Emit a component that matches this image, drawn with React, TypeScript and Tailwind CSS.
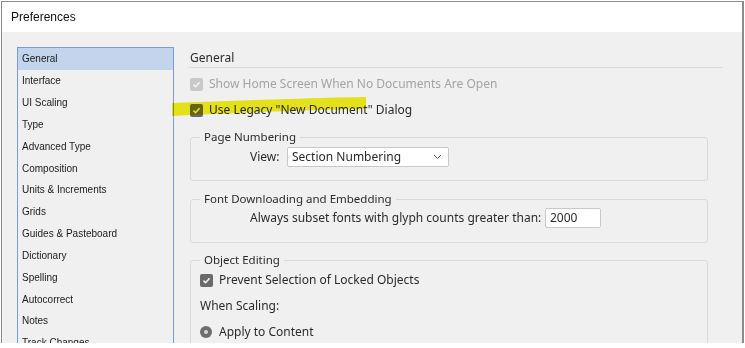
import React from "react";

const items = [
  "General",
  "Interface",
  "UI Scaling",
  "Type",
  "Advanced Type",
  "Composition",
  "Units & Increments",
  "Grids",
  "Guides & Pasteboard",
  "Dictionary",
  "Spelling",
  "Autocorrect",
  "Notes",
  "Track Changes",
];

function Check({ disabled }: { disabled?: boolean }) {
  return (
    <span
      className={`flex h-[13px] w-[13px] shrink-0 items-center justify-center rounded-[2px] ${
        disabled ? "bg-[#c9c9c9]" : "bg-[#6a6a6a]"
      }`}
    >
      <svg width="9" height="9" viewBox="0 0 9 9">
        <path d="M1.5 4.6 L3.6 6.7 L7.6 2.2" fill="none" stroke="#f4f4f4" strokeWidth="1.6" />
      </svg>
    </span>
  );
}

function Group({ title, children, className }: { title: string; children: React.ReactNode; className?: string }) {
  return (
    <fieldset className={`w-[518px] rounded-[3px] border border-[#dadada] ${className ?? ""}`}>
      <legend className="ml-[9px] h-[16px] px-[4px] text-[11.5px] leading-[16px] text-[#2a2a2a]">{title}</legend>
      {children}
    </fieldset>
  );
}

export default function App() {
  return (
    <div className="h-[348px] w-[745px] overflow-hidden bg-white" style={{ fontFamily: '"Noto Sans", "Liberation Sans", sans-serif' }}>
      <div className="ml-[1px] mt-[1px] flex h-[342px] w-[743px] flex-col overflow-hidden border-l border-r-2 border-t border-[#8c8c8c]">
        <div
          className="flex h-[30px] shrink-0 items-center bg-white pl-[9px] text-[12px] text-[#111]"
          style={{ fontFamily: '"Liberation Sans", sans-serif' }}
        >
          Preferences
        </div>
        <div className="flex min-h-0 flex-1 overflow-hidden bg-[#f0f0f0]">
          <div className="ml-[15px] mt-[15px] h-[320px] w-[157px] shrink-0 overflow-hidden border border-[#7b9bd1] bg-[#f0f0f0]">
            {items.map((it, i) => (
              <div
                key={it}
                className={`flex h-[21.83px] items-center pl-[4px] text-[10px] text-[#1a1a1a] ${i === 0 ? "bg-[#c3d5ed]" : ""}`}
                style={{ fontFamily: '"Liberation Sans", sans-serif' }}
              >
                {it}
              </div>
            ))}
          </div>
          <div className="relative ml-[16px] flex-1 pt-[16px] text-[12px] text-[#2a2a2a]">
            <div className="-ml-[2px] h-[20px] w-[535px] border-b border-[#dcdcdc] pl-[2px] text-[12px] leading-[19px]">General</div>
            <div className="mt-[6px] flex h-[20px] items-center gap-[6px]">
              <Check disabled />
              <span className="text-[#a3a3a3]">Show Home Screen When No Documents Are Open</span>
            </div>
            <div className="mt-[6px] flex h-[20px] items-center gap-[6px]">
              <Check />
              <span>Use Legacy "New Document" Dialog</span>
            </div>
            <svg className="pointer-events-none absolute left-[-18px] top-[64px] mix-blend-multiply" width="200" height="24" viewBox="0 0 200 24">
              <path d="M0 7 C60 5 130 2 194 1 L194 13 C130 14 60 17 0 20 Z" fill="#f3ef1c" />
            </svg>
            <Group title="Page Numbering" className="mt-[9px] pb-[13px]">
              <div className="mt-[2px] flex h-[20px] items-center pl-[59px]">
                <span className="w-[37px]">View:</span>
                <div className="flex h-[20px] w-[162px] items-center justify-between rounded-[2px] border border-[#c9c9c9] bg-white pl-[4px] pr-[6px]">
                  <span>Section Numbering</span>
                  <svg width="9" height="6" viewBox="0 0 9 6">
                    <path d="M1 1 L4.5 4.5 L8 1" fill="none" stroke="#555" strokeWidth="1" />
                  </svg>
                </div>
              </div>
            </Group>
            <Group title="Font Downloading and Embedding" className="mt-[10px] pb-[14px]">
              <div className="mt-[1px] flex h-[20px] items-center pl-[59px]">
                <span className="w-[295px]">Always subset fonts with glyph counts greater than:</span>
                <div className="flex h-[20px] w-[56px] items-center rounded-[2px] border border-[#c9c9c9] bg-white pl-[4px]">2000</div>
              </div>
            </Group>
            <Group title="Object Editing" className="mt-[9px] pb-[20px]">
              <div className="mt-[2px] flex h-[20px] items-center gap-[6px] pl-[9px]">
                <Check />
                <span>Prevent Selection of Locked Objects</span>
              </div>
              <div className="mt-[6px] flex h-[20px] items-center pl-[9px]">When Scaling:</div>
              <div className="mt-[6px] flex h-[20px] items-center gap-[7px] pl-[9px]">
                <span className="flex h-[12px] w-[12px] items-center justify-center rounded-full bg-[#6d6d6d]">
                  <span className="h-[4px] w-[4px] rounded-full bg-[#d8d8d8]" />
                </span>
                <span>Apply to Content</span>
              </div>
            </Group>
          </div>
        </div>
      </div>
    </div>
  );
}
